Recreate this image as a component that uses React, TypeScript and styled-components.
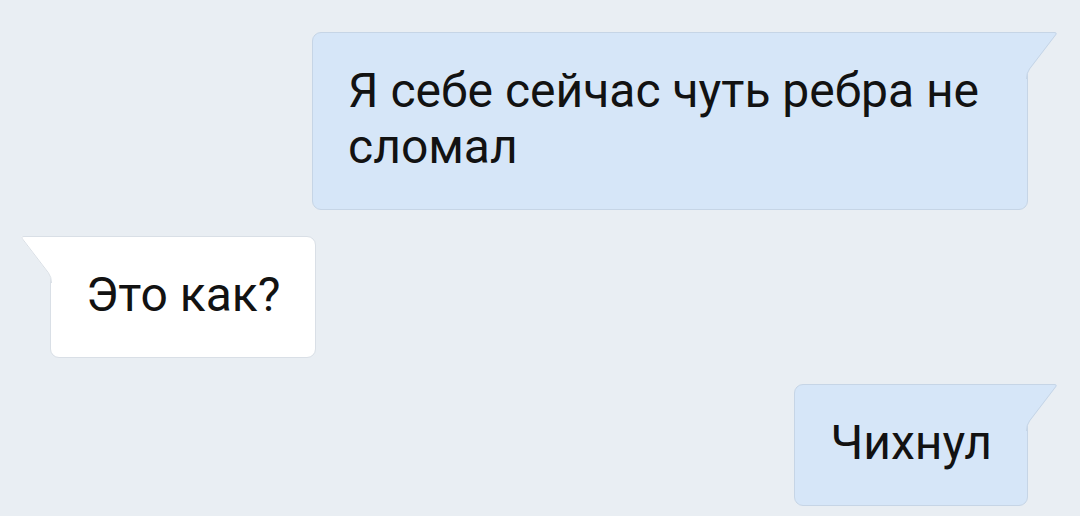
import React from "react";
import styled, { createGlobalStyle, css } from "styled-components";

type Side = "in" | "out";

const GlobalStyle = createGlobalStyle`
  html, body {
    margin: 0;
    padding: 0;
    background: #e9eef3;
  }
  body {
    font-family: Roboto, "Noto Sans", "Liberation Sans", sans-serif;
  }
`;

const Chat = styled.div`
  display: flex;
  flex-direction: column;
  gap: 26px;
  padding: 32px 52px 0 50px;
  height: 516px;
  box-sizing: border-box;
  overflow: hidden;
`;

const Row = styled.div<{ $side: Side }>`
  display: flex;
  justify-content: ${(p) => (p.$side === "out" ? "flex-end" : "flex-start")};
`;

const Bubble = styled.div<{ $side: Side }>`
  position: relative;
  box-sizing: border-box;
  max-width: 716px;
  padding: 30px 35px 34px 35px;
  font-size: 48px;
  line-height: 56px;
  color: #121212;
  border-radius: 9px;
  ${(p) =>
    p.$side === "out"
      ? css`
          background: #d6e6f8;
          border: 1px solid #c6d5e6;
          border-top-right-radius: 0;
        `
      : css`
          background: #ffffff;
          border: 1px solid #d9dfe6;
          border-top-left-radius: 0;
        `}
`;

const Tail = styled.svg<{ $side: Side }>`
  position: absolute;
  top: -1px;
  width: 32px;
  height: 47px;
  overflow: visible;
  ${(p) =>
    p.$side === "out"
      ? css`
          left: calc(100% - 2px);
        `
      : css`
          right: calc(100% - 2px);
          transform: scaleX(-1);
        `}
`;

function BubbleTail({ side }: { side: Side }) {
  const fill = side === "out" ? "#d6e6f8" : "#ffffff";
  const stroke = side === "out" ? "#c6d5e6" : "#d9dfe6";
  return (
    <Tail $side={side} viewBox="0 0 32 47">
      <path d="M0,0 H29 Q33,0 31,3 L5,37 Q2,41 2,47 H0 Z" fill={fill} />
      <path
        d="M0,0.5 H29 Q32.2,0.5 30.6,2.8 L4.6,36.8 Q1.5,41 1.5,47"
        fill="none"
        stroke={stroke}
        strokeWidth={1}
      />
    </Tail>
  );
}

const messages: { side: Side; text: string }[] = [
  { side: "out", text: "Я себе сейчас чуть ребра не сломал" },
  { side: "in", text: "Это как?" },
  { side: "out", text: "Чихнул" },
];

export default function App() {
  return (
    <>
      <GlobalStyle />
      <Chat>
        {messages.map((m, i) => (
          <Row key={i} $side={m.side}>
            <Bubble $side={m.side}>
              <BubbleTail side={m.side} />
              {m.text}
            </Bubble>
          </Row>
        ))}
      </Chat>
    </>
  );
}
